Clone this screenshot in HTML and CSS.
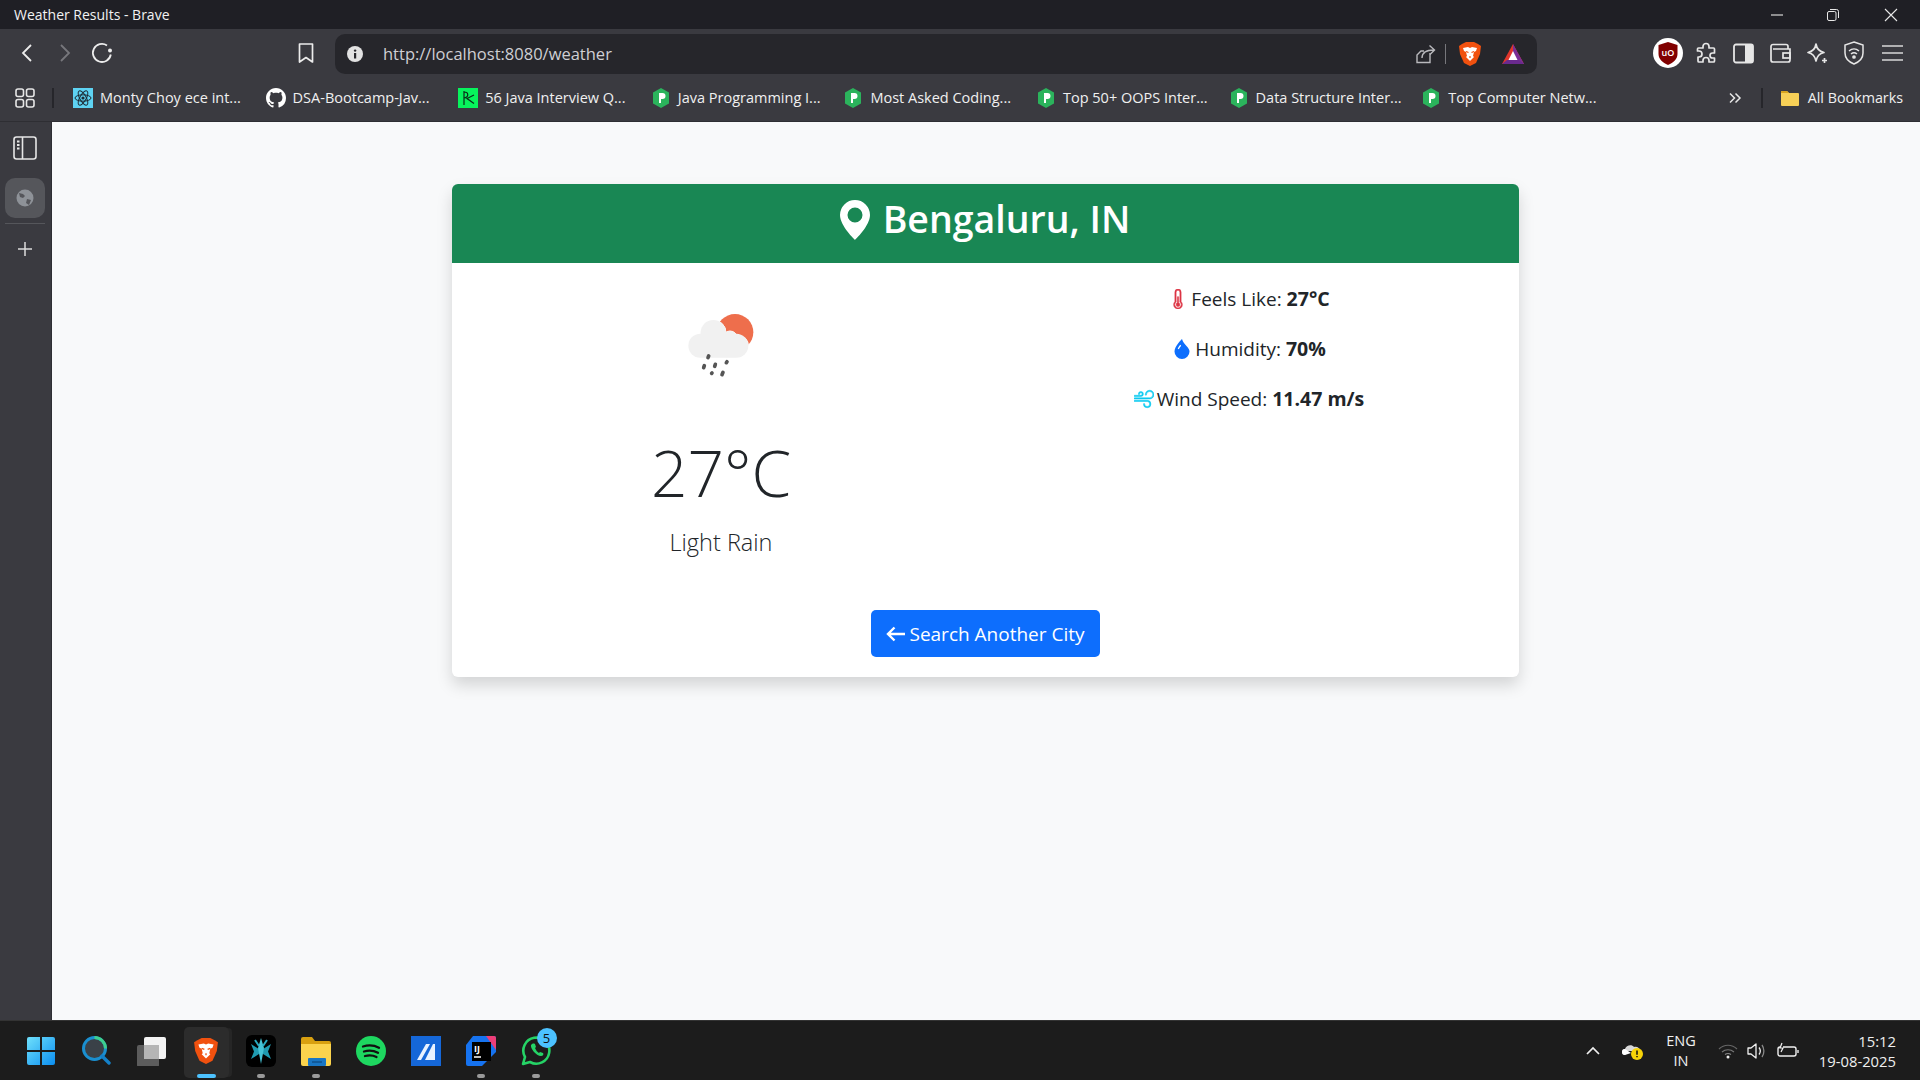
FILE: index.html
```html
<!DOCTYPE html>
<html>
<head>
    <title>Weather Results - Brave</title>
    <link rel="stylesheet" href="styles.css">
</head>
<body>
    <div class="titlebar">
        <span class="titlebar-text">Weather Results - Brave</span>
        <div class="window-controls">
            <svg class="win-min" width="14" height="14" viewBox="0 0 14 14"><path d="M1 7h12" stroke="#e8e8e8" stroke-width="1.1"/></svg>
            <svg class="win-max" width="14" height="14" viewBox="0 0 14 14" fill="none" stroke="#e8e8e8"><rect x="1.5" y="3.5" width="8.5" height="9" rx="1.5"/><path d="M4 1.5h6.5a2 2 0 0 1 2 2V10"/></svg>
            <svg class="win-close" width="14" height="14" viewBox="0 0 14 14"><path d="M1 1l12 12M13 1L1 13" stroke="#e8e8e8" stroke-width="1.1"/></svg>
        </div>
    </div>

    <div class="toolbar">
        <div class="tool"><svg width="24" height="24" viewBox="0 0 24 24" fill="none" stroke="#ececec" stroke-width="1.8"><path d="M16 4l-8 8 8 8"/></svg></div>
        <div class="tool"><svg width="24" height="24" viewBox="0 0 24 24" fill="none" stroke="#77777c" stroke-width="1.8"><path d="M8 4l8 8-8 8"/></svg></div>
        <div class="tool tool-reload"><svg width="24" height="24" viewBox="0 0 24 24" fill="none" stroke="#ececec" stroke-width="1.8"><path d="M17 4.500A9 9 0 1 0 20.800 13.500"/><circle cx="20" cy="9.500" r="2" fill="#ececec" stroke="none"/></svg></div>
        <div class="tool tool-bookmark"><svg width="20" height="24" viewBox="0 0 20 24" fill="none" stroke="#ececec" stroke-width="1.7"><path d="M3.500 3h13v18L10 16.500 3.500 21z" stroke-linejoin="round"/></svg></div>
        <div class="urlbar">
            <svg class="url-info" width="18" height="18" viewBox="0 0 18 18"><circle cx="9" cy="9" r="8" fill="#e2e2e2"/><rect x="8" y="8" width="2.200" height="5.500" fill="#26262b"/><circle cx="9.100" cy="5.600" r="1.200" fill="#26262b"/></svg>
            <span class="url-text">http://localhost:8080/weather</span>
            <svg class="url-share" width="22" height="24" viewBox="0 0 22 24" fill="none" stroke="#b9b9bd" stroke-width="1.400"><path d="M15 11v9.500H2V13l4-4h3"/><path d="M7 16c0-5 3-8 12-8M14.500 3.500L19.500 8l-4.500 4.500"/></svg>
            <span class="url-sep"></span>
            <svg class="url-brave" width="24" height="26" viewBox="0 0 24 26"><path d="M4 3l4-2h8l4 2 3 2-1 8-4 9-6 3-6-3-4-9-1-8z" fill="#f1510f"/><path d="M5 7l5-1 2 1 2-1 5 1-1 3-2 1-1 4 1 1-4 4-4-4 1-1-1-4-2-1z" fill="#fff"/><path d="M8 10.500l2.500 1M16 10.500l-2.500 1M12 15v2" stroke="#f1510f" stroke-width="1.200"/></svg>
            <svg class="url-rewards" width="24" height="22" viewBox="0 0 24 22"><path d="M12 1l11 20H1z" fill="#e0362c"/><path d="M12 1l11 20H12z" fill="#7a2f96"/><path d="M1 21l5-4h12l5 4z" fill="#6a2a8e"/><path d="M12 8l4.500 9h-9z" fill="#fff"/></svg>
        </div>
        <div class="extensions">
            <div class="ext ext-ublock"><svg width="34" height="34" viewBox="0 0 34 34"><circle cx="17" cy="17" r="15" fill="#fff"/><path d="M17 6l9.500 3v9c0 5-4 8.500-9.500 11-5.500-2.500-9.500-6-9.500-11V9z" fill="#800000"/><text x="17" y="20" text-anchor="middle" class="ublock-text">uO</text></svg></div>
            <div class="ext"><svg width="24" height="24" viewBox="0 0 24 24" fill="none" stroke="#e6e6e6" stroke-width="1.700"><path d="M9 5.500a3 3 0 0 1 6 0V7h4.500a1 1 0 0 1 1 1v4h-2a2.500 2.500 0 0 0 0 5h2v3a1 1 0 0 1-1 1H15v-1.500a3 3 0 0 0-6 0V21H5a1 1 0 0 1-1-1v-4h1a3 3 0 0 0 0-6H3.500V8a1 1 0 0 1 1-1H9z" stroke-linejoin="round"/></svg></div>
            <div class="ext"><svg width="24" height="24" viewBox="0 0 24 24"><rect x="3" y="3.500" width="19" height="18" rx="2" fill="none" stroke="#e6e6e6" stroke-width="1.800"/><rect x="14" y="3.500" width="8" height="18" fill="#e6e6e6"/></svg></div>
            <div class="ext"><svg width="24" height="24" viewBox="0 0 24 24" fill="none" stroke="#e6e6e6" stroke-width="1.700"><path d="M20 8V5.500a2 2 0 0 0-2-2H5a2 2 0 0 0-2 2V19a2 2 0 0 0 2 2h15a2 2 0 0 0 2-2V8H5"/><rect x="15" y="12" width="7" height="5"/></svg></div>
            <div class="ext"><svg width="24" height="24" viewBox="0 0 24 24" fill="none" stroke="#e6e6e6" stroke-width="1.700"><path d="M11 3c.8 5 3 7.500 8 8.500-5 1-7 3.500-8 8.500-1-5-3-7.500-8-8.500 5-1 7.200-3.500 8-8.500z" stroke-linejoin="round"/><path d="M19.500 17v5M17 19.500h5"/></svg></div>
            <div class="ext"><svg width="24" height="26" viewBox="0 0 24 26" fill="none" stroke="#e6e6e6" stroke-width="1.500"><path d="M12 2l9 3v8c0 5.500-4 9-9 11-5-2-9-5.500-9-11V5z"/><path d="M7 11c3-2.800 7-2.800 10 0M9 14c1.800-1.500 4.200-1.500 6 0"/><circle cx="12" cy="17" r="1.100" fill="#e6e6e6"/></svg></div>
            <div class="ext"><svg width="24" height="24" viewBox="0 0 24 24" stroke="#d8d8d8" stroke-width="1.700"><path d="M2 5h21M2 12h21M2 19h21"/></svg></div>
        </div>
    </div>

    <div class="bookmarks">
        <div class="tool"><svg width="22" height="22" viewBox="0 0 22 22" fill="none" stroke="#e6e6e6" stroke-width="1.600"><rect x="2" y="2" width="7.500" height="7.500" rx="2"/><rect x="12.500" y="2" width="7.500" height="7.500" rx="2"/><rect x="2" y="12.500" width="7.500" height="7.500" rx="2"/><rect x="12.500" y="12.500" width="7.500" height="7.500" rx="2"/></svg></div>
        <span class="bm-sep"></span>
        <div class="bm-list">
            <div class="bm"><svg class="bm-icon" viewBox="0 0 20 20"><rect width="20" height="20" fill="#5ed3f3"/><g fill="none" stroke="#1d2a33" stroke-width="1"><ellipse cx="10" cy="10" rx="8" ry="3.200"/><ellipse cx="10" cy="10" rx="8" ry="3.200" transform="rotate(60 10 10)"/><ellipse cx="10" cy="10" rx="8" ry="3.200" transform="rotate(120 10 10)"/></g><circle cx="10" cy="10" r="1.600" fill="#1d2a33"/></svg><span>Monty Choy ece int...</span></div>
            <div class="bm"><svg class="bm-icon" viewBox="0 0 16 16"><path fill="#fff" d="M8 0C3.580 0 0 3.580 0 8c0 3.540 2.290 6.530 5.470 7.590.4.070.55-.17.550-.38 0-.19-.01-.82-.01-1.490-2.010.37-2.530-.49-2.690-.94-.09-.23-.48-.94-.82-1.130-.28-.15-.68-.52-.01-.53.63-.01 1.080.58 1.230.82.720 1.210 1.870.87 2.330.66.070-.52.280-.87.510-1.070-1.780-.2-3.640-.89-3.640-3.950 0-.87.310-1.590.820-2.150-.08-.2-.36-1.020.08-2.120 0 0 .67-.21 2.200.82.640-.18 1.320-.27 2-.27s1.360.09 2 .27c1.530-1.040 2.200-.82 2.200-.82.440 1.100.16 1.920.08 2.120.51.560.82 1.270.82 2.150 0 3.070-1.870 3.750-3.650 3.950.29.250.54.730.54 1.480 0 1.070-.01 1.930-.01 2.200 0 .21.150.46.550.38A8.010 8.010 0 0 0 16 8c0-4.420-3.580-8-8-8z"/></svg><span>DSA-Bootcamp-Jav...</span></div>
            <div class="bm"><svg class="bm-icon" viewBox="0 0 20 20"><rect width="20" height="20" fill="#07f35c"/><path d="M6 3v14M6 4c5 0 5 5 0 6M16 7l-7 3.500 7 5" fill="none" stroke="#0b2b18" stroke-width="1.200"/></svg><span>56 Java Interview Q...</span></div>
            <div class="bm"><svg class="bm-icon" viewBox="0 0 20 20"><path d="M10 0l8 4.500v11L10 20l-8-4.500v-11z" fill="#2bb35c"/><path d="M8 5h3.500a3 3 0 0 1 0 6H10v4H8z" fill="#fff"/></svg><span>Java Programming I...</span></div>
            <div class="bm"><svg class="bm-icon" viewBox="0 0 20 20"><path d="M10 0l8 4.500v11L10 20l-8-4.500v-11z" fill="#2bb35c"/><path d="M8 5h3.500a3 3 0 0 1 0 6H10v4H8z" fill="#fff"/></svg><span>Most Asked Coding...</span></div>
            <div class="bm"><svg class="bm-icon" viewBox="0 0 20 20"><path d="M10 0l8 4.500v11L10 20l-8-4.500v-11z" fill="#2bb35c"/><path d="M8 5h3.500a3 3 0 0 1 0 6H10v4H8z" fill="#fff"/></svg><span>Top 50+ OOPS Inter...</span></div>
            <div class="bm"><svg class="bm-icon" viewBox="0 0 20 20"><path d="M10 0l8 4.500v11L10 20l-8-4.500v-11z" fill="#2bb35c"/><path d="M8 5h3.500a3 3 0 0 1 0 6H10v4H8z" fill="#fff"/></svg><span>Data Structure Inter...</span></div>
            <div class="bm"><svg class="bm-icon" viewBox="0 0 20 20"><path d="M10 0l8 4.500v11L10 20l-8-4.500v-11z" fill="#2bb35c"/><path d="M8 5h3.500a3 3 0 0 1 0 6H10v4H8z" fill="#fff"/></svg><span>Top Computer Netw...</span></div>
        </div>
        <div class="bm-right">
            <svg width="14" height="14" viewBox="0 0 14 14" fill="none" stroke="#e6e6e6" stroke-width="1.500"><path d="M2 2.500L6.500 7 2 11.500M7.500 2.500L12 7l-4.500 4.500"/></svg>
            <span class="bm-sep bm-sep-right"></span>
            <svg class="bm-folder" width="20" height="18" viewBox="0 0 20 18"><path d="M1 3a1 1 0 0 1 1-1h5l2 2h9a1 1 0 0 1 1 1v11a1 1 0 0 1-1 1H2a1 1 0 0 1-1-1z" fill="#f7d057"/><path d="M1 3a1 1 0 0 1 1-1h5l2 2H1z" fill="#d9a520"/></svg>
            <span class="bm-all">All Bookmarks</span>
        </div>
    </div>

    <div class="main">
        <div class="sidebar">
            <svg class="side-panel" width="24" height="24" viewBox="0 0 24 24" fill="none" stroke="#e6e6e6" stroke-width="1.600"><rect x="1" y="1" width="22" height="22" rx="2.500"/><path d="M9.500 1v22"/><path d="M4 5.500h2.500M4 9h2.500M4 12.500h2.500" stroke-width="2"/></svg>
            <div class="side-tab"><svg width="18" height="18" viewBox="0 0 18 18"><circle cx="9" cy="9" r="8.500" fill="#8e9298"/><path d="M3 4l4 1 2 2-2 2-3-1zM11 10l4 1-2 5-3-2z" fill="#55565b"/></svg></div>
            <div class="side-line"></div>
            <svg width="16" height="16" viewBox="0 0 16 16" stroke="#dcdcdc" stroke-width="1.500"><path d="M8 1v14M1 8h14"/></svg>
        </div>

        <div class="content">
            <div class="card">
                <div class="card-header">
                    <svg class="pin" width="40" height="40" viewBox="0 0 16 16" fill="#fff"><path d="M8 16s6-5.686 6-10A6 6 0 0 0 2 6c0 4.314 6 10 6 10zm0-7a3 3 0 1 1 0-6 3 3 0 0 1 0 6z"/></svg>
                    <h2>Bengaluru, IN</h2>
                </div>
                <div class="card-body">
                    <div class="col col-left">
                        <svg class="weather-icon" width="100" height="100" viewBox="0 0 300 300">
                            <circle cx="192" cy="112" r="55" fill="#ee6e4c"/>
                            <g fill="#f1f1f1" stroke="#fff" stroke-width="3">
                                <circle cx="127" cy="113" r="38"/>
                                <circle cx="177" cy="130" r="22"/>
                                <circle cx="207" cy="150" r="25"/>
                            </g>
                            <g fill="#f1f1f1">
                                <circle cx="127" cy="113" r="38"/>
                                <circle cx="177" cy="130" r="22"/>
                                <rect x="52" y="116" width="180" height="72" rx="36"/>
                            </g>
                            <g stroke="#555" stroke-width="11" stroke-linecap="round">
                                <path d="M113 183l-2 5M100 212l-2 6M133 208l-2 6M168 200l-2 3M123 234l-1 1M156 232l-3 7"/>
                            </g>
                        </svg>
                        <div class="temp">27°C</div>
                        <p class="desc">Light Rain</p>
                    </div>
                    <div class="col col-right">
                        <p class="stat"><svg class="stat-icon stat-icon-bold" width="20" height="20" viewBox="0 0 16 16" fill="#dc3545" stroke="#dc3545"><path d="M9.500 12.500a1.500 1.500 0 1 1-2-1.415V6.500a.5.5 0 0 1 1 0v4.585a1.500 1.500 0 0 1 1 1.415z"/><path d="M5.500 2.500a2.500 2.500 0 0 1 5 0v7.550a3.500 3.500 0 1 1-5 0V2.500zM8 1a1.500 1.500 0 0 0-1.500 1.500v7.987l-.167.15a2.500 2.500 0 1 0 3.333 0l-.166-.15V2.500A1.500 1.500 0 0 0 8 1z"/></svg>Feels Like: <b>27°C</b></p>
                        <p class="stat"><svg class="stat-icon" width="20" height="20" viewBox="0 0 16 16" fill="#0d6efd"><path d="M8 16a6 6 0 0 0 6-6c0-1.655-1.122-2.904-2.432-4.362C10.254 4.176 8.750 2.503 8 0c0 0-6 5.686-6 10a6 6 0 0 0 6 6ZM6.646 4.646l.708.708c-.29.29-1.128 1.311-1.907 2.870l-.894-.448c.82-1.641 1.717-2.753 2.093-3.130Z"/></svg>Humidity: <b>70%</b></p>
                        <p class="stat"><svg class="stat-icon stat-icon-bold" width="20" height="20" viewBox="0 0 16 16" fill="#0dcaf0" stroke="#0dcaf0"><path d="M12.500 2A2.500 2.500 0 0 0 10 4.500a.5.5 0 0 1-1 0A3.500 3.500 0 1 1 12.500 8H.5a.5.5 0 0 1 0-1h12a2.500 2.500 0 0 0 0-5zm-7 1a1 1 0 0 0-1 1 .5.5 0 0 1-1 0 2 2 0 1 1 2 2h-5a.5.5 0 0 1 0-1h5a1 1 0 0 0 0-2zM0 9.500A.5.5 0 0 1 .5 9h10.042a3 3 0 1 1-3 3 .5.5 0 0 1 1 0 2 2 0 1 0 2-2H.5a.5.5 0 0 1-.5-.5z"/></svg>Wind Speed: <b>11.47 m/s</b></p>
                    </div>
                </div>
                <div class="card-footer">
                    <a class="btn" href="#"><svg width="20" height="20" viewBox="0 0 20 20" fill="none" stroke="#fff" stroke-width="2.400"><path d="M19 10H2M8.500 3.500L2 10l6.500 6.500"/></svg>Search Another City</a>
                </div>
            </div>
        </div>
    </div>

    <div class="taskbar">
        <div class="apps">
            <div class="app"><svg width="30" height="30" viewBox="0 0 30 30"><defs><linearGradient id="winGrad" x1="0" y1="0" x2="1" y2="1"><stop offset="0" stop-color="#6fe0fb"/><stop offset="1" stop-color="#0b8ef0"/></linearGradient></defs><path fill="url(#winGrad)" d="M1 3a2 2 0 0 1 2-2h11v13H1zM16 1h11a2 2 0 0 1 2 2v11H16zM1 16h13v13H3a2 2 0 0 1-2-2zM16 16h13v11a2 2 0 0 1-2 2H16z"/></svg></div>
            <div class="app"><svg width="30" height="32" viewBox="0 0 30 32" fill="none"><circle cx="13.500" cy="13.500" r="11" fill="#3a4148" stroke="#1a8fd0" stroke-width="3"/><path d="M21 21l7 7" stroke="#1480c8" stroke-width="3.400" stroke-linecap="round"/><path d="M13.500 2.500a11 11 0 0 1 11 11" stroke="#3ecf8e" stroke-width="3"/></svg></div>
            <div class="app"><svg width="30" height="30" viewBox="0 0 30 30"><rect x="1" y="9" width="22" height="22" rx="2" fill="#5c5c5c"/><rect x="8" y="1" width="22" height="22" rx="2" fill="#f3f3f3"/><rect x="8" y="9" width="15" height="14" fill="#b5b5b5"/></svg></div>
            <div class="app app-active"><svg width="26" height="30" viewBox="0 0 24 26"><path d="M4 3l4-2h8l4 2 3 2-1 8-4 9-6 3-6-3-4-9-1-8z" fill="#f1510f"/><path d="M5 7l5-1 2 1 2-1 5 1-1 3-2 1-1 4 1 1-4 4-4-4 1-1-1-4-2-1z" fill="#fff"/><path d="M8 10.500l2.500 1M16 10.500l-2.500 1M12 15v2" stroke="#f1510f" stroke-width="1.200"/></svg><span class="app-bar"></span></div>
            <div class="app"><svg width="30" height="32" viewBox="0 0 30 32"><rect width="30" height="32" rx="6" fill="#000"/><path d="M5 9l8 5v5l-8 5 3-7.500zM25 9l-8 5v5l8 5-3-7.500z" fill="#1f9ab0"/><path d="M15 3l3 10-3 16-3-16z" fill="#46c3d6"/><path d="M9 5l4 6M21 5l-4 6" stroke="#2aa9bf" stroke-width="2"/></svg><span class="app-dot"></span></div>
            <div class="app"><svg width="30" height="30" viewBox="0 0 30 30"><path d="M0 3a2 2 0 0 1 2-2h9l3 4h14a2 2 0 0 1 2 2v3H0z" fill="#d8a010"/><path d="M0 8h30v20a2 2 0 0 1-2 2H2a2 2 0 0 1-2-2z" fill="#fbd34d"/><rect x="7" y="22" width="18" height="8" rx="1" fill="#1976c4"/><path d="M11 26h10" stroke="#0e4f8a" stroke-width="1.400"/></svg><span class="app-dot"></span></div>
            <div class="app"><svg width="30" height="30" viewBox="0 0 30 30" fill="none"><circle cx="15" cy="15" r="15" fill="#1ed760"/><path d="M7 10.500c6-1.800 11-1.300 16 1.200M8 15.500c5-1.400 9.500-1 14 1.200M9 20c4-1 8-.8 11.500 1" stroke="#111" stroke-width="2.300" stroke-linecap="round"/></svg></div>
            <div class="app"><svg width="30" height="30" viewBox="0 0 30 30"><rect width="30" height="30" fill="#1567d8"/><path d="M6 24L15 8h4L10 24zM14 24l8-16h2v16z" fill="#e8f2ff"/></svg></div>
            <div class="app"><svg width="30" height="30" viewBox="0 0 30 30"><path d="M7 0h21a2 2 0 0 1 2 2v14L16 30H2a2 2 0 0 1-2-2V9z" fill="#1673f0"/><path d="M20 0h8a2 2 0 0 1 2 2v12z" fill="#ee3e78"/><rect x="6" y="6" width="19" height="19" fill="#000"/><text x="8" y="16" class="ij-text">IJ</text><path d="M8 21h7" stroke="#fff" stroke-width="1.500"/></svg><span class="app-dot"></span></div>
            <div class="app"><svg width="30" height="30" viewBox="0 0 30 30" fill="none"><path d="M2 28l2-7a13 13 0 1 1 5 5z" stroke="#25d366" stroke-width="2.600" stroke-linejoin="round"/><path d="M10 9c-1 3 5 11 10 11 2 0 3-2 2-3l-3-1-1 1c-2-1-3-3-4-5l1-1-1-3c-2-1-3 0-4 1z" fill="#25d366"/></svg><span class="badge">5</span><span class="app-dot"></span></div>
        </div>
        <div class="tray">
            <svg class="tray-chevron" width="16" height="16" viewBox="0 0 16 16" fill="none" stroke="#f0f0f0" stroke-width="1.700"><path d="M2 11l6-6 6 6"/></svg>
            <svg class="tray-cloud" width="22" height="20" viewBox="0 0 22 20"><path d="M3 14a3 3 0 0 1 0-6c1-4 7-5 9-2 3-1 6 1 6 4H5z" fill="#d8d8d8"/><path d="M3 14a3 3 0 0 1 0-6l6 4z" fill="#fff"/><circle cx="15" cy="13" r="6" fill="#f7d308"/><path d="M15 9.500v4.200M15 15v1.300" stroke="#111" stroke-width="1.500"/></svg>
            <div class="tray-lang"><span>ENG</span><span>IN</span></div>
            <svg class="tray-wifi" width="20" height="16" viewBox="0 0 20 16" fill="none"><path d="M1 6c5-5 13-5 18 0" stroke="#666" stroke-width="1.200"/><path d="M4 9c3.500-3 8.500-3 12 0" stroke="#777" stroke-width="1.200"/><path d="M7 11.500c1.800-1.200 4.200-1.200 6 0" stroke="#888" stroke-width="1.200"/><circle cx="10" cy="14" r="1.500" fill="#eee"/></svg>
            <svg class="tray-vol" width="20" height="18" viewBox="0 0 20 18" fill="none" stroke="#f0f0f0" stroke-width="1.300"><path d="M1 6h3l5-4v14l-5-4H1z" stroke-linejoin="round"/><path d="M12 5.500c1.500 2 1.500 5 0 7"/><path d="M15 3c2.500 3.500 2.500 8.500 0 12" stroke="#888"/></svg>
            <svg class="tray-batt" width="22" height="18" viewBox="0 0 22 18" fill="none" stroke="#f0f0f0" stroke-width="1.400"><path d="M6 5h11a2 2 0 0 1 2 2v5a2 2 0 0 1-2 2H3a2 2 0 0 1-2-2V7a2 2 0 0 1 2-2"/><path d="M21 8v3"/><path d="M5 1L3 6h3l-2 4" stroke-width="1.200"/></svg>
            <div class="clock"><span>15:12</span><span>19-08-2025</span></div>
        </div>
    </div>
</body>
</html>
```

FILE: styles.css
```css
html, body {
    margin: 0;
    padding: 0;
    height: 100%;
}
body {
    width: 1920px;
    height: 1080px;
    overflow: hidden;
    display: flex;
    flex-direction: column;
    font-family: "Open Sans", "Noto Sans", sans-serif;
    color: #212529;
    background-color: #f8f9fa;
}

/* browser chrome */
.titlebar {
    height: 29px;
    flex: none;
    display: flex;
    align-items: center;
    background-color: #1f1f25;
    color: #f2f2f2;
    font-size: 14px;
}
.titlebar-text {
    margin-left: 14px;
}
.window-controls {
    margin-left: auto;
    display: flex;
    align-items: center;
}
.win-min {
    margin-right: 42px;
}
.win-max {
    margin-right: 44px;
}
.win-close {
    margin-right: 22px;
}
.toolbar {
    height: 45px;
    flex: none;
    display: flex;
    align-items: flex-start;
    padding: 5px 0 0 8px;
    box-sizing: border-box;
    background-color: #3a3a40;
}
.tool {
    width: 38px;
    height: 40px;
    flex: none;
    display: flex;
    align-items: center;
    justify-content: center;
}
.toolbar .tool svg, .ext svg {
    margin-bottom: 2px;
}
.tool-reload {
    margin-right: -1px;
}
.tool-reload svg {
    margin-right: 2px;
}
.tool-bookmark {
    margin-left: 166px;
}
.urlbar {
    width: 1202px;
    height: 40px;
    flex: none;
    margin-left: 10px;
    display: flex;
    align-items: center;
    background-color: #26262b;
    border-radius: 10px;
    color: #cfcfd4;
    font-size: 16.5px;
}
.url-info {
    margin-left: 11px;
}
.url-text {
    margin-left: 19px;
    margin-bottom: 1px;
}
.url-share {
    margin-left: auto;
}
.url-sep {
    width: 1px;
    height: 20px;
    margin-left: 8px;
    background-color: #77777c;
}
.url-brave {
    margin-left: 12px;
}
.url-rewards {
    margin-left: 19px;
    margin-right: 12px;
}
.extensions {
    display: flex;
    margin-left: 111px;
}
.ext {
    width: 37.2px;
    height: 40px;
    display: flex;
    align-items: center;
    justify-content: center;
}
.ext-ublock {
    width: 39px;
}
.ublock-text {
    font-size: 9px;
    font-weight: 600;
    fill: #fff;
}
.bookmarks {
    height: 48px;
    flex: none;
    display: flex;
    align-items: center;
    padding: 0 17px 0 6px;
    box-sizing: border-box;
    background-color: #3a3a40;
    border-bottom: 1px solid #2e2e33;
    color: #f0f0f0;
    font-size: 14.5px;
}
.bm-sep {
    width: 2px;
    height: 20px;
    margin-left: 8px;
    background-color: #26262b;
}
.bm-list {
    display: flex;
    margin-left: 19px;
}
.bm {
    width: 192.6px;
    display: flex;
    align-items: center;
    white-space: nowrap;
}
.bm-icon {
    width: 20px;
    height: 20px;
    flex: none;
    margin-right: 7px;
}
.bm-right {
    margin-left: auto;
    display: flex;
    align-items: center;
    white-space: nowrap;
}
.bm-all {
    font-size: 14.3px;
}
.bm-sep-right {
    margin-left: 19px;
}
.bm-folder {
    margin-left: 17px;
    margin-right: 8px;
}

/* sidebar and page */
.main {
    flex: 1;
    min-height: 0;
    display: flex;
}
.sidebar {
    width: 52px;
    flex: none;
    display: flex;
    flex-direction: column;
    align-items: center;
    padding: 14px 1px 0 0;
    box-sizing: border-box;
    background-color: #3a3a40;
    border-right: 1px solid #2e2e33;
}
.side-tab {
    width: 40px;
    height: 40px;
    margin-top: 18px;
    display: flex;
    align-items: center;
    justify-content: center;
    background-color: #55565b;
    border-radius: 10px;
}
.side-line {
    width: 40px;
    height: 1px;
    margin: 5px 0 17px;
    background-color: #55565b;
}
.content {
    flex: 1;
    padding: 62px 1px 0 0;
    display: flex;
    justify-content: center;
    align-items: flex-start;
    background-color: #f8f9fa;
}
.card {
    width: 1067px;
    background-color: #fff;
    border-radius: 6px;
    overflow: hidden;
    box-shadow: 0 8px 16px rgba(0, 0, 0, 0.15);
}
.card-header {
    height: 79px;
    padding: 0 6px 8px 0;
    box-sizing: border-box;
    display: flex;
    align-items: center;
    justify-content: center;
    gap: 8px;
    background-color: #198754;
    color: #fff;
}
.card-header h2 {
    margin: 0;
    padding-bottom: 2px;
    font-size: 37.5px;
    font-weight: 600;
    line-height: 48px;
}
.card-body {
    display: flex;
    padding: 16px 6px 0 5px;
}
.col {
    flex: 1;
    text-align: center;
}
.col-left {
    padding-top: 16px;
}
.col-right {
    padding-top: 5px;
}
.weather-icon {
    display: block;
    margin: 0 auto;
}
.temp {
    margin-top: 35px;
    font-size: 64px;
    font-weight: 300;
    line-height: 86px;
}
.desc {
    margin: 11px 0 0;
    font-size: 23.5px;
    font-weight: 300;
    line-height: 30px;
}
.stat {
    margin: 0 0 20px;
    font-size: 19px;
    line-height: 30px;
}
.stat b {
    font-size: 19.5px;
    font-weight: 700;
}
.stat-icon {
    vertical-align: -3px;
    margin-right: 3px;
}
.stat-icon-bold {
    stroke-width: 0.4;
}
.card-footer {
    display: flex;
    justify-content: center;
    padding: 53px 0 20px;
}
.btn {
    height: 47px;
    width: 229px;
    display: flex;
    align-items: center;
    justify-content: center;
    gap: 3px;
    box-sizing: border-box;
    background-color: #0d6efd;
    border-radius: 5px;
    color: #fff;
    font-size: 19px;
    text-decoration: none;
}

/* windows taskbar */
.taskbar {
    height: 60px;
    flex: none;
    display: flex;
    align-items: center;
    background-color: #1c1c1c;
    border-top: 1px solid #333;
    box-sizing: border-box;
    color: #f0f0f0;
}
.apps {
    display: flex;
    padding-left: 13.5px;
}
.app {
    position: relative;
    width: 55px;
    height: 58px;
    display: flex;
    align-items: center;
    justify-content: center;
    box-sizing: border-box;
}
.app-active::before {
    content: "";
    position: absolute;
    left: 5px;
    right: 5px;
    top: 5px;
    bottom: 2px;
    background-color: #2c2c2c;
    border-radius: 5px;
    box-shadow: 4px 0 0 -1px #262626;
}
.app-active svg {
    position: relative;
}
.app-bar {
    position: absolute;
    left: 18px;
    bottom: 2px;
    width: 19px;
    height: 4px;
    border-radius: 2px;
    background-color: #4cc2ff;
}
.app-dot {
    position: absolute;
    left: 23px;
    bottom: 2px;
    width: 8px;
    height: 4px;
    border-radius: 2px;
    background-color: #9a9a9a;
}
.badge {
    position: absolute;
    top: 6px;
    right: 7px;
    width: 20px;
    height: 20px;
    border-radius: 50%;
    background-color: #4cc2ff;
    color: #111;
    font-size: 13px;
    line-height: 20px;
    text-align: center;
}
.ij-text {
    font-size: 9px;
    font-weight: 700;
    fill: #fff;
}
.tray {
    margin-left: auto;
    display: flex;
    align-items: center;
    padding-right: 24px;
    font-size: 14.8px;
}
.tray-cloud {
    margin-left: 21px;
}
.tray-lang {
    width: 40px;
    margin-left: 17px;
    display: flex;
    flex-direction: column;
    align-items: center;
    line-height: 20px;
    font-size: 14.5px;
}
.tray-wifi {
    margin-left: 17px;
}
.tray-vol {
    margin-left: 9px;
}
.tray-batt {
    margin-left: 10px;
}
.clock {
    width: 97px;
    display: flex;
    flex-direction: column;
    align-items: flex-end;
    line-height: 20px;
}
```
